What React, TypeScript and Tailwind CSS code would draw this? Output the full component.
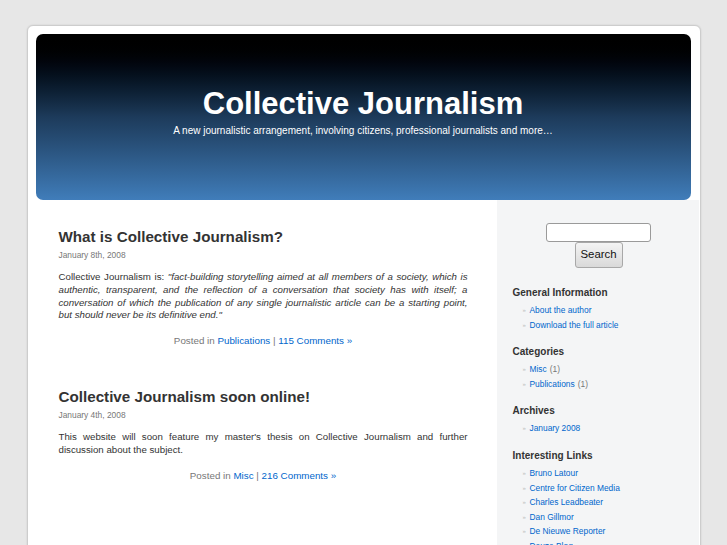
import React from 'react';

const font = { fontFamily: '"Liberation Sans", Arial, sans-serif' };

interface Post {
  title: string;
  date: string;
  body: React.ReactNode;
  category: string;
  comments: string;
}

const posts: Post[] = [
  {
    title: 'What is Collective Journalism?',
    date: 'January 8th, 2008',
    body: (
      <>
        Collective Journalism is:{' '}
        <em>
          "fact-building storytelling aimed at all members of a society, which is authentic, transparent,
          and the reflection of a conversation that society has with itself; a conversation of which the
          publication of any single journalistic article can be a starting point, but should never be its
          definitive end."
        </em>
      </>
    ),
    category: 'Publications',
    comments: '115 Comments »',
  },
  {
    title: 'Collective Journalism soon online!',
    date: 'January 4th, 2008',
    body: (
      <>
        This website will soon feature my master's thesis on Collective Journalism and further discussion
        about the subject.
      </>
    ),
    category: 'Misc',
    comments: '216 Comments »',
  },
];

interface LinkItem {
  label: string;
  count?: number;
}

const widgets: { title: string; items: LinkItem[] }[] = [
  { title: 'General Information', items: [{ label: 'About the author' }, { label: 'Download the full article' }] },
  { title: 'Categories', items: [{ label: 'Misc', count: 1 }, { label: 'Publications', count: 1 }] },
  { title: 'Archives', items: [{ label: 'January 2008' }] },
  {
    title: 'Interesting Links',
    items: [
      { label: 'Bruno Latour' },
      { label: 'Centre for Citizen Media' },
      { label: 'Charles Leadbeater' },
      { label: 'Dan Gillmor' },
      { label: 'De Nieuwe Reporter' },
      { label: 'Deuze Blog' },
    ],
  },
];

const PostBlock: React.FC<{ post: Post; first?: boolean }> = ({ post, first }) => (
  <div className={first ? '' : 'mt-[41px]'}>
    <h2 className="text-[15.2px] leading-[18px] font-bold text-[#333]">{post.title}</h2>
    <div className="mt-[3px] text-[8.4px] leading-[12px] text-[#777]">{post.date}</div>
    <p className="mt-[10px] text-[9.7px] leading-[12.8px] text-[#333] text-justify">{post.body}</p>
    <p className="mt-[12px] text-[9.8px] leading-[13px] text-[#777] text-center">
      Posted in <a className="text-[#06c]">{post.category}</a> | <a className="text-[#06c]">{post.comments}</a>
    </p>
  </div>
);

const App: React.FC = () => {
  return (
    <div className="min-h-screen bg-[#e7e7e7] pt-[25px] overflow-hidden" style={font}>
      <div className="w-[674px] h-[530px] mx-auto bg-white border border-[#cdcdcd] rounded-t-[6px] shadow-[0_0_2px_rgba(0,0,0,0.12)] flex flex-col">
        {/* Header */}
        <div className="pt-[8px] pl-[8px] pr-[9px]">
          <div className="h-[166px] rounded-[7px] bg-gradient-to-b from-[#000000] via-[#1d3b5b] to-[#407dba] flex flex-col items-center text-white">
            <h1 className="mt-[52px] text-[31px] leading-[36px] font-bold">Collective Journalism</h1>
            <div className="mt-[3px] text-[10px] leading-[12px]">
              A new journalistic arrangement, involving citizens, professional journalists and more…
            </div>
          </div>
        </div>

        <div className="flex flex-1">
          {/* Content */}
          <div className="w-[469px] pl-[31px] pr-[29px] pt-[28px]">
            {posts.map((p, i) => (
              <PostBlock key={p.title} post={p} first={i === 0} />
            ))}
          </div>

          {/* Sidebar */}
          <div className="w-[202px] bg-[#f4f5f6] pt-[23px]">
            <div className="flex flex-col items-center pl-[2px]">
              <input className="w-[105px] h-[19px] bg-white border border-[#9a9a9a] rounded-[3px]" />
              <button className="w-[48px] h-[26px] text-[11.4px] text-[#111] border border-[#a8a8a8] rounded-[3px] bg-gradient-to-b from-[#f4f4f4] to-[#d9d9d9]">
                Search
              </button>
            </div>
            <div className="mt-[18px] pl-[16px]">
              {widgets.map((w, i) => (
                <div key={w.title} className={i === 0 ? '' : 'mt-[13px]'}>
                  <h3 className="text-[10px] leading-[14px] font-bold text-[#333]">{w.title}</h3>
                  <ul className="mt-[3px] pl-[10px]">
                    {w.items.map((it) => (
                      <li key={it.label} className="flex items-center text-[8.4px] leading-[14.6px]">
                        <span className="text-[#bbb] text-[6px] w-[7px]">»</span>
                        <a className="text-[#06c]">{it.label}</a>
                        {it.count !== undefined && <span className="text-[#777] ml-[3px]">({it.count})</span>}
                      </li>
                    ))}
                  </ul>
                </div>
              ))}
            </div>
          </div>
        </div>
      </div>
    </div>
  );
};

export default App;
